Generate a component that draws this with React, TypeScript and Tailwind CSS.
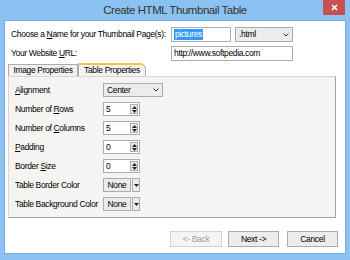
import React from 'react';

const U: React.FC<{ children: React.ReactNode }> = ({ children }) => (
  <span className="underline underline-offset-1">{children}</span>
);

const SpinBox: React.FC<{ value: string }> = ({ value }) => (
  <div className="flex h-[14px] w-[37px] items-center border border-[#abadb3] bg-white">
    <span className="flex-1 pl-[2px] leading-none">{value}</span>
    <div className="mr-[1px] flex h-[10px] w-[8px] flex-col items-center justify-center gap-[1px] border border-[#acacac] bg-[#ececec]">
      <svg width="5" height="3" viewBox="0 0 5 3">
        <path d="M0 3 L2.5 0 L5 3 Z" fill="#222" />
      </svg>
      <svg width="5" height="3" viewBox="0 0 5 3">
        <path d="M0 0 L2.5 3 L5 0 Z" fill="#222" />
      </svg>
    </div>
  </div>
);

const ColorPick: React.FC = () => (
  <div className="flex h-[14px] w-[37px]">
    <div className="flex w-[28px] items-center justify-center border border-[#acacac] bg-[#ececec] leading-none">
      None
    </div>
    <div className="ml-[1px] flex w-[8px] items-center justify-center border border-[#acacac] bg-[#ececec]">
      <svg width="5" height="3" viewBox="0 0 5 3">
        <path d="M0 0 L2.5 3 L5 0 Z" fill="#222" />
      </svg>
    </div>
  </div>
);

const Row: React.FC<{ label: React.ReactNode; children: React.ReactNode }> = ({ label, children }) => (
  <div className="flex h-[14px] items-center">
    <span className="w-[88px] leading-none">{label}</span>
    {children}
  </div>
);

export default function App() {
  return (
    <div
      className="flex h-[260px] w-[350px] flex-col whitespace-nowrap bg-[#8cc2f2] text-[8.5px] tracking-[-0.35px] text-black"
      style={{ fontFamily: '"Liberation Sans", Arial, sans-serif' }}
    >
      <div className="relative flex h-[21px] items-center justify-center pt-[1px]">
        <span className="text-[11.5px] tracking-[-0.45px] text-[#333]">Create HTML Thumbnail Table</span>
        <div className="absolute right-[5px] top-0 flex h-[15px] w-[22px] items-center justify-center bg-[#c75050]">
          <svg width="7" height="7" viewBox="0 0 7 7">
            <path d="M1 1 L6 6 M6 1 L1 6" stroke="#fff" strokeWidth="1.6" />
          </svg>
        </div>
      </div>
      <div className="mx-[5px] mb-[7px] flex flex-1 flex-col bg-white pt-[6px] shadow-[0_0_0_1px_#79aee3]">
        <div className="flex h-[15px] items-center pl-[6px]">
          <span className="w-[160px]">
            Choose a <U>N</U>ame for your Thumbnail Page(s):
          </span>
          <div className="flex h-[15px] w-[60px] items-center border border-[#abadb3] pl-[2px]">
            <span className="bg-[#3399ff] px-[1px] leading-[11px] text-white">pictures</span>
          </div>
          <div className="ml-[4px] flex h-[15px] w-[58px] items-center justify-between border border-[#acacac] bg-[#ececec] px-[3px]">
            <span>.html</span>
            <svg width="6" height="4" viewBox="0 0 6 4">
              <path d="M0.5 0.5 L3 3 L5.5 0.5" stroke="#333" strokeWidth="1" fill="none" />
            </svg>
          </div>
        </div>
        <div className="mt-[4px] flex h-[15px] items-center pl-[6px]">
          <span className="w-[160px]">
            Your Website <U>U</U>RL:
          </span>
          <div className="flex h-[15px] w-[122px] items-center border border-[#abadb3] pl-[2px]">
            http://www.softpedia.com
          </div>
        </div>
        <div className="ml-[3px] mr-[9px] mt-[2px] flex h-[13px] items-end">
          <div className="flex h-[12px] w-[70px] items-center justify-center border border-b-0 border-[#acacac] bg-[#f0f0f0] leading-none">
            Image Properties
          </div>
          <div className="flex h-[13px] w-[68px] items-center justify-center rounded-tr-[6px] border border-b-0 border-t-2 border-[#acacac] border-t-[#f5c242] bg-[#f5f4f2] leading-none">
            Table Properties
          </div>
        </div>
        <div className="ml-[3px] mr-[9px] flex h-[142px] flex-col gap-[5px] border border-[#d5d5d5] border-b-[#a0a0a0] border-r-[#a0a0a0] bg-[#f5f4f2] pl-[6px] pt-[6px]">
          <Row
            label={
              <>
                <U>A</U>lignment
              </>
            }
          >
            <div className="flex h-[14px] w-[60px] items-center justify-between border border-[#acacac] bg-[#ececec] px-[3px]">
              <span className="leading-none">Center</span>
              <svg width="6" height="4" viewBox="0 0 6 4">
                <path d="M0.5 0.5 L3 3 L5.5 0.5" stroke="#333" strokeWidth="1" fill="none" />
              </svg>
            </div>
          </Row>
          <Row
            label={
              <>
                Number of <U>R</U>ows
              </>
            }
          >
            <SpinBox value="5" />
          </Row>
          <Row
            label={
              <>
                Number of <U>C</U>olumns
              </>
            }
          >
            <SpinBox value="5" />
          </Row>
          <Row
            label={
              <>
                <U>P</U>adding
              </>
            }
          >
            <SpinBox value="0" />
          </Row>
          <Row
            label={
              <>
                Border <U>S</U>ize
              </>
            }
          >
            <SpinBox value="0" />
          </Row>
          <Row label="Table Border Color">
            <ColorPick />
          </Row>
          <Row label="Table Background Color">
            <ColorPick />
          </Row>
        </div>
        <div className="mr-[7px] mt-[13px] flex justify-end gap-[6px]">
          <div className="flex h-[16px] w-[52px] items-center justify-center border border-[#d0d0d0] bg-[#f4f4f4] text-[#a0a0a0]">
            &lt;- Back
          </div>
          <div className="flex h-[16px] w-[51px] items-center justify-center border border-[#acacac] bg-[#ececec]">
            Next -&gt;
          </div>
          <div className="ml-[2px] flex h-[16px] w-[51px] items-center justify-center border border-[#acacac] bg-[#ececec]">
            Cancel
          </div>
        </div>
      </div>
    </div>
  );
}
